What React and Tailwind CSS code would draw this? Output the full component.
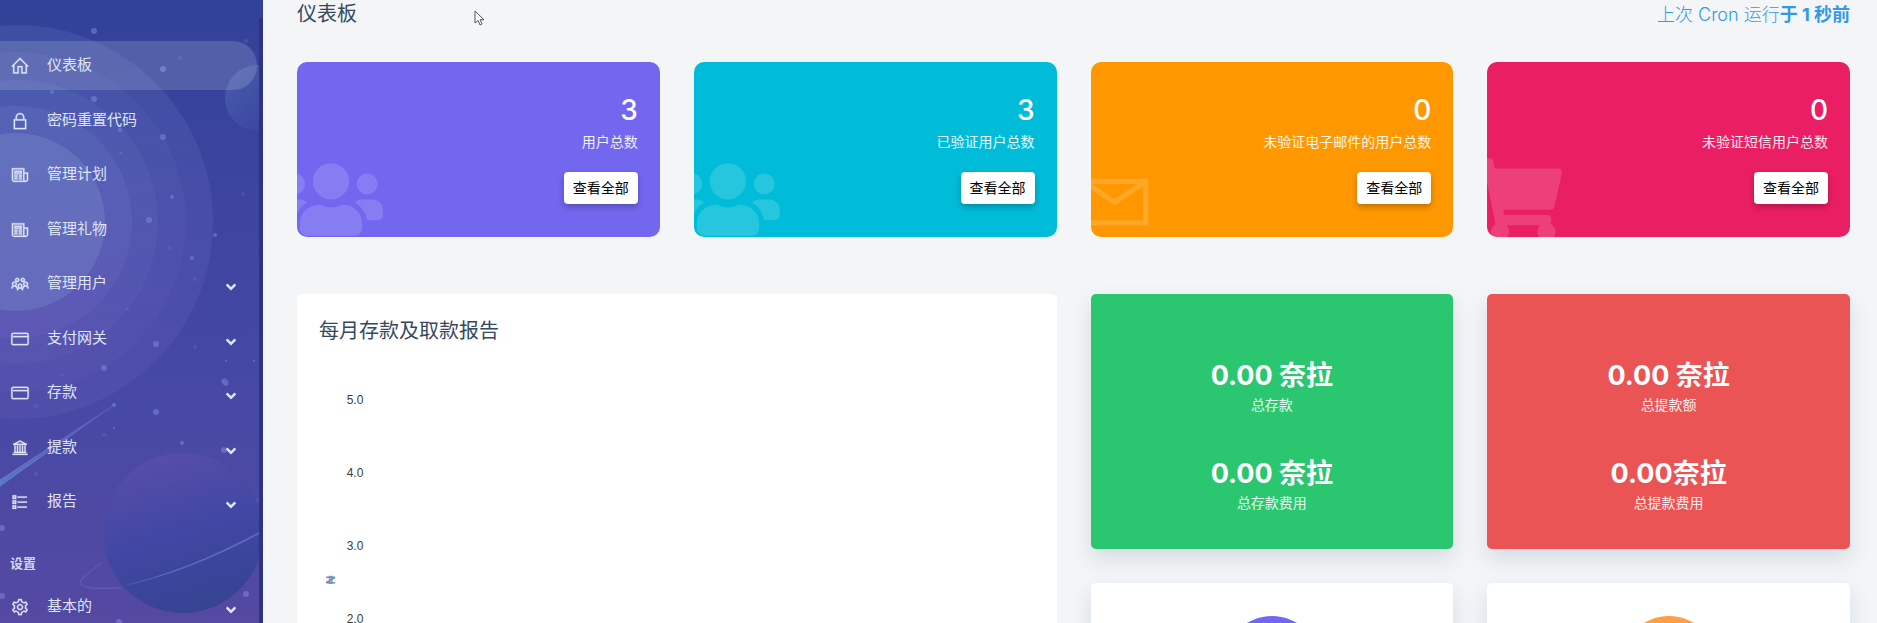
import React from "react";
import {
  LiaHomeSolid,
  LiaLockSolid,
  LiaNewspaper,
  LiaUsersSolid,
  LiaCreditCard,
  LiaUniversitySolid,
  LiaListSolid,
  LiaCogSolid,
  LiaEnvelope,
} from "react-icons/lia";
import { FaUsers, FaShoppingCart, FaAngleDown } from "react-icons/fa";

const menuItems = [
  { label: "仪表板", icon: LiaHomeSolid, active: true },
  { label: "密码重置代码", icon: LiaLockSolid },
  { label: "管理计划", icon: LiaNewspaper },
  { label: "管理礼物", icon: LiaNewspaper },
  { label: "管理用户", icon: LiaUsersSolid, hasSub: true },
  { label: "支付网关", icon: LiaCreditCard, hasSub: true },
  { label: "存款", icon: LiaCreditCard, hasSub: true },
  { label: "提款", icon: LiaUniversitySolid, hasSub: true },
  { label: "报告", icon: LiaListSolid, hasSub: true },
];

const settingItems = [{ label: "基本的", icon: LiaCogSolid, hasSub: true }];

const userCards = [
  { value: "3", label: "用户总数", icon: FaUsers, iconWidth: "w-[104px]", color: "bg-[#7367f0]" },
  { value: "3", label: "已验证用户总数", icon: FaUsers, iconWidth: "w-[104px]", color: "bg-[#00bcd9]" },
  { value: "0", label: "未验证电子邮件的用户总数", icon: LiaEnvelope, iconWidth: "w-[83px]", color: "bg-[#ff9800]" },
  { value: "0", label: "未验证短信用户总数", icon: FaShoppingCart, iconWidth: "w-[93px]", color: "bg-[#ea1e63]" },
];

const totalCards = [
  {
    color: "bg-[#2ac770]",
    rows: [
      { value: "0.00 奈拉", label: "总存款" },
      { value: "0.00 奈拉", label: "总存款费用" },
    ],
  },
  {
    color: "bg-[#ea5455]",
    rows: [
      { value: "0.00 奈拉", label: "总提款额" },
      { value: "0.00奈拉", label: "总提款费用" },
    ],
  },
];

const ticks = ["5.0", "4.0", "3.0", "2.0"];

// x, y, radius
const stars = [
  [94, 31, 3], [163, 69, 3], [94, 99, 3], [52, 92, 2], [163, 137, 3], [120, 130, 2],
  [121, 153, 1], [172, 197, 2], [149, 220, 3], [215, 235, 2], [192, 258, 2], [156, 344, 3],
  [104, 368, 3], [226, 361, 1], [254, 361, 1], [156, 412, 3], [114, 405, 2], [114, 428, 1],
  [182, 443, 2], [224, 450, 3], [2, 528, 3], [2, 596, 3], [246, 594, 3], [119, 622, 3],
];

const faintStars = [
  [180, 58, 2], [246, 41, 2], [169, 248, 2], [195, 279, 2], [127, 309, 2], [62, 375, 2],
  [195, 347, 2], [36, 406, 2], [104, 435, 2], [36, 474, 2], [258, 500, 2], [243, 194, 2],
];

const SidebarArt = () => (
  <svg
    className="absolute inset-0 h-full w-full"
    viewBox="0 0 263 623"
    preserveAspectRatio="xMidYMin slice"
    aria-hidden="true"
  >
    <defs>
      <linearGradient id="sky" x1="0" y1="0" x2="0" y2="1">
        <stop offset="0" stopColor="#324298" />
        <stop offset="0.35" stopColor="#3e45a0" />
        <stop offset="0.65" stopColor="#4749a5" />
        <stop offset="1" stopColor="#5549a2" />
      </linearGradient>
      <linearGradient id="planet" x1="0.3" y1="0" x2="0.6" y2="1">
        <stop offset="0" stopColor="#584ea9" />
        <stop offset="0.5" stopColor="#4147a4" />
        <stop offset="1" stopColor="#364392" />
      </linearGradient>
      <linearGradient id="moon" x1="0" y1="0" x2="1" y2="1">
        <stop offset="0" stopColor="#6f8fd0" stopOpacity="0.4" />
        <stop offset="1" stopColor="#4a63bd" stopOpacity="0" />
      </linearGradient>
      <linearGradient id="halo" x1="0" y1="0" x2="0" y2="1">
        <stop offset="0" stopColor="#7f9be0" />
        <stop offset="1" stopColor="#8a6fd0" />
      </linearGradient>
      <linearGradient id="tail" x1="0" y1="1" x2="1" y2="0">
        <stop offset="0" stopColor="#5c82d2" stopOpacity="0.8" />
        <stop offset="1" stopColor="#7b7fd0" stopOpacity="0.2" />
      </linearGradient>
    </defs>
    <rect width="263" height="623" fill="url(#sky)" />
    <g fill="url(#halo)">
      <circle cx="16" cy="222" r="197" opacity="0.14" />
      <circle cx="16" cy="222" r="170" opacity="0.07" />
      <circle cx="16" cy="222" r="142" opacity="0.1" />
      <circle cx="16" cy="222" r="116" opacity="0.14" />
    </g>
    <circle cx="16" cy="222" r="89" fill="#86a0d6" opacity="0.26" />
    <circle cx="258" cy="98" r="33" fill="url(#moon)" />
    <path d="M0 480 L114 405 L0 486 Z" fill="url(#tail)" stroke="url(#tail)" />
    <circle cx="183" cy="533" r="80" fill="url(#planet)" />
    <path
      d="M103 562 C86 574 78 581 81 584 C84 590 105 588 122 588"
      fill="none"
      stroke="#6f63bd"
      strokeOpacity="0.5"
      strokeWidth="1.5"
    />
    <path d="M122 586 C165 576 215 556 263 530 L263 532 C215 558 165 578 122 586 Z" fill="#6470c8" opacity="0.8" />
    <g fill="#7f86dc" opacity="0.55">
      {stars.map(([x, y, r]) => (
        <circle key={`${x}-${y}`} cx={x} cy={y} r={r} />
      ))}
      <ellipse cx="225" cy="382" rx="3" ry="4" transform="rotate(-35 225 382)" />
    </g>
    <g fill="#7f86dc" opacity="0.2">
      {faintStars.map(([x, y, r]) => (
        <circle key={`${x}-${y}`} cx={x} cy={y} r={r} />
      ))}
    </g>
  </svg>
);

const MenuItem = ({ item }) => {
  const Icon = item.icon;
  return (
    <li className="odd:mb-1.5 even:mb-[5px]">
      <a
        href="#"
        className={`flex h-[49px] items-center pl-[10px] pr-6 text-[15px] text-[#dfe4f7] ${
          item.active ? "mr-1.5 rounded-r-[24px] bg-white/15" : ""
        }`}
      >
        <Icon className="mr-[17px] shrink-0 stroke-current stroke-[0.5] text-[20px]" />
        <span className="grow">{item.label}</span>
        {item.hasSub && <FaAngleDown className="mt-1.5 text-[16px]" />}
      </a>
    </li>
  );
};

const Sidebar = () => (
  <aside className="relative w-[263px] shrink-0 overflow-hidden bg-[#4749a5]">
    <SidebarArt />
    <nav className="relative pt-[41px]">
      <ul>
        {menuItems.map((item) => (
          <MenuItem key={item.label} item={item} />
        ))}
      </ul>
      <h2 className="pb-[9px] pl-[10px] pt-[21px] text-[13px] font-bold leading-5 text-[#d3d6ea]">设置</h2>
      <ul>
        {settingItems.map((item) => (
          <MenuItem key={item.label} item={item} />
        ))}
      </ul>
    </nav>
    {/* scrollbar thumb */}
    <div className="absolute bottom-0 right-0 top-[18px] w-1 rounded-t bg-[#2d3480]" />
  </aside>
);

const UserCard = ({ card }) => {
  const Icon = card.icon;
  return (
    <section
      className={`relative flex flex-col items-end overflow-hidden rounded-[10px] px-[22px] pb-[33px] pt-8 text-white ${card.color}`}
    >
      <Icon className={`absolute -bottom-1 -left-[18px] h-[83px] text-white/15 ${card.iconWidth}`} />
      <span className="text-[28px] font-medium leading-8">{card.value}</span>
      <span className="mt-1.5 text-[14px] leading-5 text-white/90">{card.label}</span>
      <button
        type="button"
        className="relative mt-5 rounded-[4px] bg-white px-[9px] text-[14px] leading-8 text-black shadow-[0_3px_6px_rgba(0,0,0,0.25)]"
      >
        查看全部
      </button>
    </section>
  );
};

const TotalCard = ({ card }) => (
  <section
    className={`flex flex-col gap-[41px] rounded-[5px] pb-9 pt-16 text-center text-white shadow-[0_10px_20px_rgba(100,125,150,0.2)] ${card.color}`}
  >
    {card.rows.map((row) => (
      <div key={row.label}>
        <p className="text-[27px] font-bold leading-9">{row.value}</p>
        <p className="mt-px text-[14px] leading-5 text-white/90">{row.label}</p>
      </div>
    ))}
  </section>
);

const CountCard = ({ color }) => (
  <section className="rounded-[5px] bg-white pb-10 pt-[33px] shadow-[0_10px_20px_rgba(100,125,150,0.2)]">
    <div className={`mx-auto size-24 rounded-full ${color}`} />
  </section>
);

const ReportChart = () => (
  <section className="rounded-[5px] bg-white px-[22px] pb-10 pt-[23px]">
    <h2 className="text-[20px] leading-7 text-[#34495e]">每月存款及取款报告</h2>
    <div className="mt-[19px] flex items-start font-['Liberation_Sans',sans-serif] text-[12px]">
      <span className="mt-[208px] w-6 -rotate-90 text-center font-bold leading-4 text-[#7a8fb5]">₦</span>
      <div className="flex w-6 flex-col items-center text-[#373d3f]">
        {ticks.map((tick) => (
          <span key={tick} className="leading-[73px]">
            {tick}
          </span>
        ))}
      </div>
    </div>
  </section>
);

const App = () => {
  return (
    <div className="flex h-screen overflow-hidden bg-[#f3f5f7] font-['Inter','Noto_Sans_CJK_SC',sans-serif]">
      <Sidebar />
      <main className="grow overflow-hidden pl-[34px] pr-[27px]">
        <header className="flex h-7 items-center justify-between">
          <h1 className="text-[20px] text-[#34495e]">仪表板</h1>
          <p className="text-[18px] font-light text-[#3399e3]">
            上次 Cron 运行<b className="font-bold">于 1 秒前</b>
          </p>
        </header>

        <div className="mt-[34px] grid grid-cols-4 gap-[34px]">
          {userCards.map((card) => (
            <UserCard key={card.label} card={card} />
          ))}
        </div>

        <div className="mt-[57px] grid grid-cols-2 gap-[34px]">
          <ReportChart />
          <div className="grid grid-cols-2 content-start gap-[34px]">
            {totalCards.map((card) => (
              <TotalCard key={card.color} card={card} />
            ))}
            <CountCard color="bg-[#7367f0]" />
            <CountCard color="bg-[#ff9f43]" />
          </div>
        </div>
      </main>

      <svg className="absolute left-[474px] top-[10px] h-4 w-3" viewBox="0 0 12 16" aria-hidden="true">
        <path
          d="M1 1 V13 L4 10.5 L6 15 L8 14 L6 9.8 H10 Z"
          fill="#fff"
          stroke="#555"
          strokeWidth="1"
          strokeLinejoin="round"
        />
      </svg>
    </div>
  );
};

export default App;
